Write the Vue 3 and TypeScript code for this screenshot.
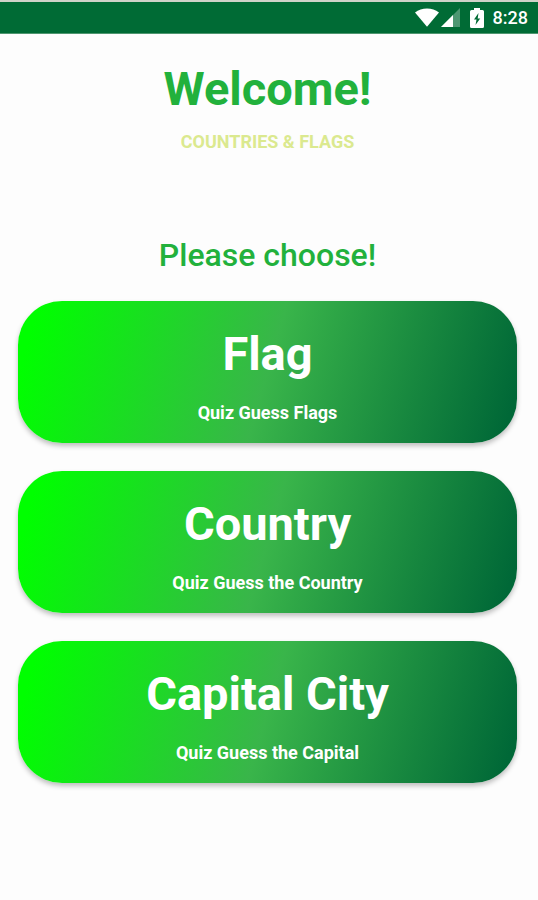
<script setup lang="ts">
interface Quiz {
  id: string
  title: string
  caption: string
}

const quizzes: Quiz[] = [
  { id: 'flag', title: 'Flag', caption: 'Quiz Guess Flags' },
  { id: 'country', title: 'Country', caption: 'Quiz Guess the Country' },
  { id: 'capital', title: 'Capital City', caption: 'Quiz Guess the Capital' },
]
</script>

<template>
  <div class="screen">
    <div class="status">
      <svg class="wifi" viewBox="0 0 24 19" aria-hidden="true">
        <path d="M0 4.600C3.400 1.900 7.500.500 12 .500s8.600 1.400 12 4.100L12 18.800z" fill="#fff" />
      </svg>
      <svg class="signal" viewBox="0 0 19 19" aria-hidden="true">
        <path d="M0 19 19 0v19z" fill="#fff" fill-opacity=".3" />
        <path d="M0 19 12 7v12z" fill="#fff" />
      </svg>
      <svg class="battery" viewBox="0 0 14 20" aria-hidden="true">
        <path d="M4 0h6v2h2.500A1.500 1.500 0 0 1 14 3.500v15a1.500 1.500 0 0 1-1.500 1.500h-11A1.500 1.500 0 0 1 0 18.500v-15A1.500 1.500 0 0 1 1.500 2H4z" fill="#fff" />
        <path d="M8.500 5 4 11.500h2.500L5.500 17l4.700-6.500H7.700z" fill="#006b35" />
      </svg>
      <span class="time">8:28</span>
    </div>

    <main class="content">
      <h1>Welcome!</h1>
      <p class="tagline">COUNTRIES &amp; FLAGS</p>
      <h2>Please choose!</h2>
      <div class="choices">
        <button v-for="quiz in quizzes" :key="quiz.id" type="button" class="choice">
          <span class="title">{{ quiz.title }}</span>
          <span class="caption">{{ quiz.caption }}</span>
        </button>
      </div>
    </main>
  </div>
</template>

<style>
body {
  background: #fdfdfd;
}
</style>

<style scoped>
.screen {
  min-height: 100vh;
  background: #fdfdfd;
  font-family: Roboto, "Liberation Sans", sans-serif;
}

.status {
  display: flex;
  align-items: center;
  justify-content: flex-end;
  box-sizing: border-box;
  height: 34px;
  padding-right: 10px;
  border-top: 2px solid #cfd3c9;
  border-bottom: 1px solid #4f9670;
  background: #006b35;
  color: #fff;
}

.wifi {
  width: 24px;
  height: 19px;
  margin-right: 2px;
}

.signal {
  width: 19px;
  height: 19px;
  margin-right: 10px;
}

.battery {
  width: 14px;
  height: 20px;
  margin-right: 9px;
}

.time {
  font-size: 18px;
  font-weight: 500;
  line-height: 24px;
}

.content {
  padding: 27px 21px 40px 18px;
  text-align: center;
}

h1,
h2,
p {
  margin: 0;
}

h1 {
  color: #22b13c;
  font-size: 47px;
  font-weight: 700;
  line-height: 56px;
}

.tagline {
  margin-top: 13px;
  color: #dbe98f;
  font-size: 18px;
  font-weight: 700;
  line-height: 24px;
}

h2 {
  margin-top: 81px;
  color: #22b13c;
  font-size: 32px;
  font-weight: 500;
  line-height: 40px;
}

.choices {
  display: flex;
  flex-direction: column;
  gap: 28px;
  margin-top: 26px;
}

.choice {
  display: flex;
  flex-direction: column;
  align-items: center;
  gap: 19px;
  padding: 25px 16px 18px;
  border: 0;
  border-radius: 44px;
  background: linear-gradient(106deg, #00ff00 4%, #39b54a 50%, #006837 97%);
  box-shadow: 0 3px 5px rgba(0, 0, 0, 0.25);
  color: #fff;
  font-family: inherit;
  font-weight: 700;
  cursor: pointer;
}

.title {
  font-size: 47px;
  line-height: 56px;
}

.caption {
  font-size: 18px;
  line-height: 24px;
}
</style>
